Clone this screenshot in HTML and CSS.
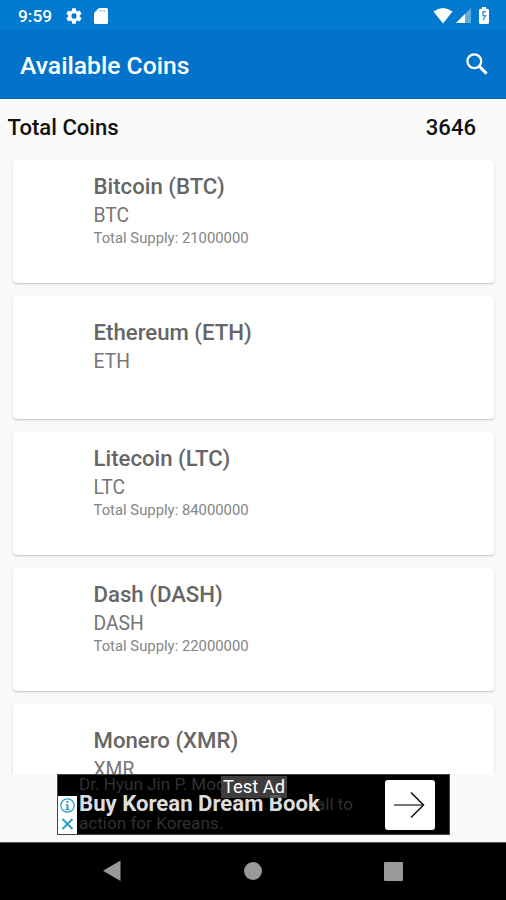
FILE: index.html
```html
<!DOCTYPE html>
<html lang="en">
<head>
<meta charset="utf-8">
<title>Available Coins</title>
<link rel="stylesheet" href="styles.css">
</head>
<body>
<div class="screen">
  <div class="status">
    <span class="time">9:59</span>
    <svg class="gear" viewBox="2 2 20 20" width="16" height="16"><path fill="#fff" d="M19.14 12.94c.04-.3.06-.61.06-.94s-.02-.64-.07-.94l2.03-1.58a.49.49 0 0 0 .12-.61l-1.92-3.32a.49.49 0 0 0-.59-.22l-2.39.96c-.5-.38-1.03-.7-1.62-.94l-.36-2.54a.48.48 0 0 0-.48-.41h-3.84a.48.48 0 0 0-.47.41l-.36 2.54c-.59.24-1.13.57-1.62.94l-2.39-.96a.48.48 0 0 0-.59.22L2.74 8.87a.48.48 0 0 0 .12.61l2.03 1.58c-.05.3-.09.63-.09.94s.02.64.07.94l-2.03 1.58a.49.49 0 0 0-.12.61l1.92 3.32c.12.22.37.29.59.22l2.39-.96c.5.38 1.03.7 1.62.94l.36 2.54c.05.24.24.41.48.41h3.84c.24 0 .44-.17.47-.41l.36-2.54c.59-.24 1.13-.56 1.62-.94l2.39.96c.22.08.47 0 .59-.22l1.92-3.32a.48.48 0 0 0-.12-.61zM12 15.3a3.3 3.3 0 1 1 0-6.6 3.3 3.3 0 0 1 0 6.6z"/></svg>
    <svg class="card-icon" viewBox="0 0 14 16" width="14" height="16"><path fill="#fff" d="M5 0h7.500q1.500 0 1.500 1.500v13q0 1.500-1.500 1.500h-11Q0 16 0 14.500V5z"/><path stroke="#8fc3ea" stroke-width="1.500" stroke-dasharray="1.500 .8" d="M5 2.700h7"/></svg>
    <svg class="wifi" viewBox="0 0 20 16" width="20" height="16"><path fill="#fff" d="M.5 3.500Q10-3.500 19.500 3.500L10 15.500z"/></svg>
    <svg class="signal" viewBox="0 0 15 15" width="15" height="15"><path fill="#62addf" d="M15 0v15H0z"/><path fill="#fff" d="M9 6v9H0z"/></svg>
    <svg class="battery" viewBox="0 0 10 17" width="10" height="17"><path fill="#fff" d="M3 0h4v1.700h1.500q1.500 0 1.500 1.500v12.300Q10 17 8.500 17h-7Q0 17 0 15.500V3.200q0-1.500 1.500-1.500H3z"/><path fill="none" stroke="#4a96d2" stroke-width="1.500" d="M6.800 4.800H4v4h2.500L4.300 13"/></svg>
  </div>
  <header class="appbar">
    <h1>Available Coins</h1>
    <svg viewBox="0 0 22 22" width="22" height="22" fill="none" stroke="#fff"><circle cx="8.300" cy="8.300" r="6.900" stroke-width="2.300"/><path stroke-width="2.900" d="m13.400 13.400 7.200 7.200"/></svg>
  </header>
  <div class="total"><span>Total Coins</span><span>3646</span></div>
  <main class="list">
    <article class="coin"><h2>Bitcoin (BTC)</h2><p class="symbol">BTC</p><p class="supply">Total Supply: 21000000</p></article>
    <article class="coin short"><h2>Ethereum (ETH)</h2><p class="symbol">ETH</p></article>
    <article class="coin"><h2>Litecoin (LTC)</h2><p class="symbol">LTC</p><p class="supply">Total Supply: 84000000</p></article>
    <article class="coin"><h2>Dash (DASH)</h2><p class="symbol">DASH</p><p class="supply">Total Supply: 22000000</p></article>
    <article class="coin short"><h2>Monero (XMR)</h2><p class="symbol">XMR</p></article>
  </main>
  <div class="ad-area">
    <div class="ad">
      <div class="choices">
        <svg viewBox="0 0 19 38" width="19" height="38" fill="none" stroke="#28a0c4"><circle cx="9.500" cy="9.500" r="6.700" stroke-width="1.200"/><path stroke-width="2" d="M9.500 5v2M9.500 8.500v5.500"/><path stroke-width="1" d="M7.500 8.700h2M7 13.700h5"/><path stroke-width="1.900" d="m4.500 23 10 10m0-10-10 10"/></svg>
      </div>
      <div class="copy">
        <div class="line"><span>Dr. Hyun Jin P. Moo</span><span class="tail-first">y</span></div>
        <div class="line"><span class="tail-second">all to</span></div>
        <div class="line">action for Koreans.</div>
      </div>
      <strong class="headline">Buy Korean Dream Book</strong>
      <span class="test">Test Ad</span>
      <div class="go"><svg viewBox="0 0 32 28" width="32" height="28" fill="none" stroke="#111"><path stroke="#555" stroke-width="1.600" d="M1 14h29"/><path stroke-width="1.500" d="m18 1.500 12.500 12.500L18 26.500"/></svg></div>
    </div>
  </div>
  <nav class="nav">
    <svg viewBox="0 0 20 22" width="20" height="22"><path fill="#999" d="M18.500.5v20.500L1 10.700z"/></svg>
    <span class="home"></span>
    <span class="recent"></span>
  </nav>
</div>
</body>
</html>
```

FILE: styles.css
```css
* { box-sizing: border-box; }
body { margin: 0; font-family: Roboto, sans-serif; background: #fafafa; }
h1, h2, p { margin: 0; }
svg { display: block; flex: none; }
.screen { width: 506px; height: 900px; display: flex; flex-direction: column; overflow: hidden; }
.status { height: 30px; flex: none; background: #027ad0; display: flex; align-items: center; padding: 1px 17px 0 18px; color: #fff; }
.time { font-size: 17.3px; font-weight: 500; width: 48px; white-space: nowrap; }
.card-icon { margin-left: 12px; }
.wifi { margin-left: auto; }
.signal { margin-left: 3px; }
.battery { margin-left: 8px; }
.appbar { height: 69px; flex: none; background: #0273cb; border-bottom: 1px solid #0864b5; display: flex; align-items: center; justify-content: space-between; padding: 0 18px 0 20px; color: #fff; }
.appbar h1 { font-size: 24.7px; font-weight: 500; line-height: 30px; padding-top: 3px; }
.total { height: 61px; flex: none; display: flex; justify-content: space-between; padding: 13px 30px 0 7.5px; font-size: 22.1px; line-height: 30px; font-weight: 500; color: #111; }
.list { height: 614px; flex: none; overflow: hidden; display: flex; flex-direction: column; gap: 13px; padding: 0 12px 0 13px; }
.coin { height: 123px; flex: none; background: #fff; border-radius: 4px; box-shadow: 0 1px 2px rgba(0,0,0,.22); padding: 13px 0 0 80.5px; color: #757575; }
.coin.short { padding-top: 23px; }
.coin h2 { font-size: 22.2px; line-height: 27px; font-weight: 500; color: #666; }
.symbol { font-size: 19.3px; line-height: 28px; margin-top: 2px; }
.supply { font-size: 14.85px; line-height: 20px; margin-top: -2px; color: #858585; }
.ad-area { height: 68px; flex: none; padding: 0 56px 0 57px; }
.ad { position: relative; width: 393px; height: 61px; background: #000; border: 1px solid #444; display: flex; align-items: flex-end; }
.choices { width: 19px; height: 38px; background: #fff; }
.copy { flex: 1; height: 59px; padding-left: 2px; color: #303030; font-size: 17.1px; line-height: 19.5px; }
.line { display: flex; height: 19.5px; white-space: nowrap; }
.tail-first { margin-left: 53px; }
.tail-second { margin-left: 237px; }
.headline { position: absolute; left: 21px; top: 16px; font-size: 22.15px; line-height: 24px; font-weight: 700; color: #ddd; white-space: nowrap; }
.test { position: absolute; left: 163px; top: 1px; width: 66px; height: 22px; background: rgba(70,70,70,.88); color: #fff; font-size: 18.3px; line-height: 22px; text-align: center; white-space: nowrap; }
.go { width: 50px; height: 50px; margin: 0 14px 4px 0; background: #fff; border-radius: 3px; display: flex; align-items: center; justify-content: center; }
.go svg { margin-right: 3px; }
.nav { flex: 1; background: #000; border-top: 1px solid #555; display: flex; align-items: center; padding: 0 103px 1px 102px; justify-content: space-between; }
.home { width: 18px; height: 18px; border-radius: 50%; background: #999; }
.recent { width: 19px; height: 19px; border-radius: 1px; background: #999; }
```
